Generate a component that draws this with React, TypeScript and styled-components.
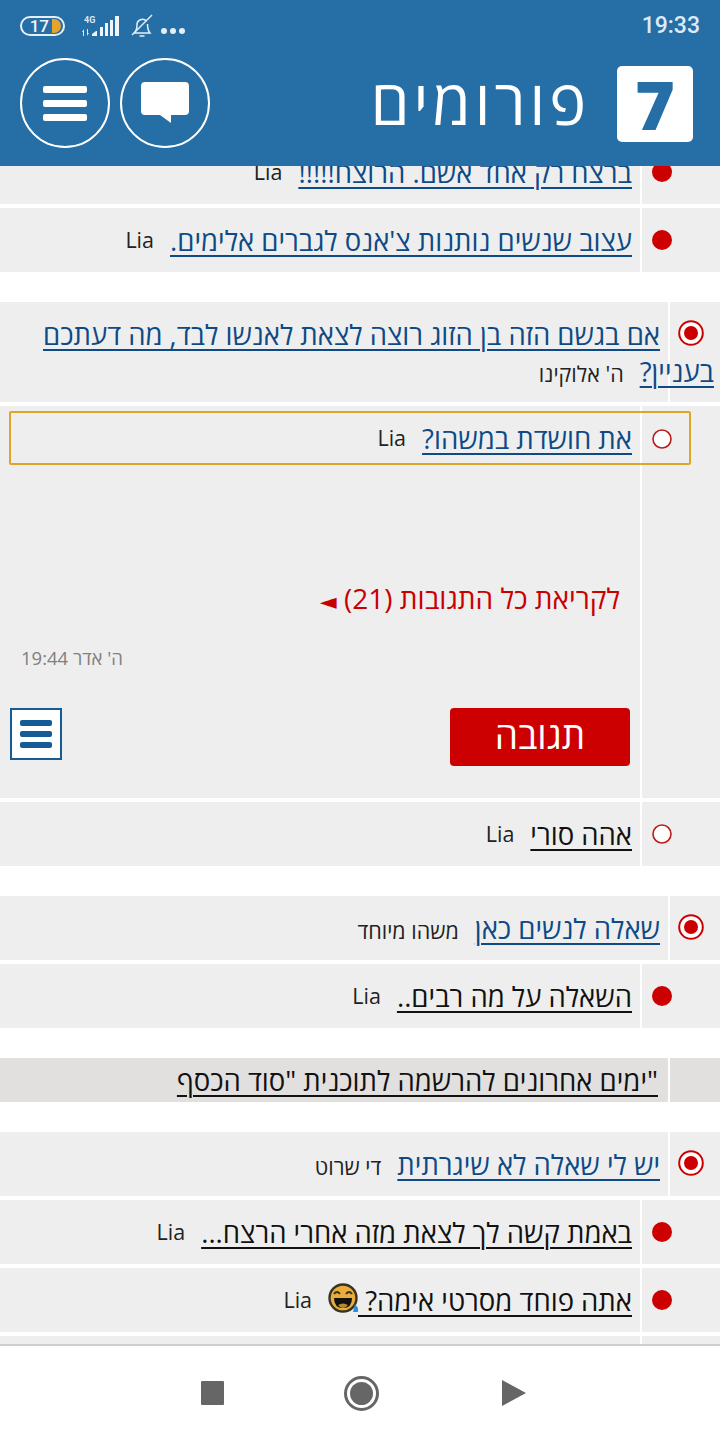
import styled, { createGlobalStyle } from "styled-components";

const GlobalStyle = createGlobalStyle`
  html, body {
    margin: 0;
    padding: 0;
    background: #fff;
  }
  * {
    box-sizing: border-box;
  }
`;

const font = `"Open Sans", "Noto Sans", "DejaVu Sans", sans-serif`;

function Bullet({ kind, size = 20 }: { kind: "full" | "empty" | "ring"; size?: number }) {
  if (kind === "ring") {
    return (
      <svg width="26" height="26" viewBox="0 0 26 26">
        <circle cx="13" cy="13" r="11.8" fill="#fff" stroke="#cc0000" strokeWidth="2" />
        <circle cx="13" cy="13" r="7" fill="#cc0000" />
      </svg>
    );
  }
  return (
    <svg width={size} height={size} viewBox="0 0 20 20">
      {kind === "full" ? (
        <circle cx="10" cy="10" r="10" fill="#cc0000" />
      ) : (
        <circle cx="10" cy="10" r="9" fill="#fff" stroke="#bb1a1a" strokeWidth="1.6" />
      )}
    </svg>
  );
}

function LaughEmoji() {
  return (
    <svg width="30" height="30" viewBox="0 0 30 30">
      <circle cx="15" cy="15" r="13.5" fill="#e9ad3c" stroke="#3a3320" strokeWidth="2.4" />
      <path d="M6 11q3-4 6 0M18 11q3-4 6 0" fill="none" stroke="#3a3320" strokeWidth="2" />
      <path d="M6 15h18q0 10-9 10T6 15z" fill="#111" />
      <path d="M10 22q5-3 10 0q-2 3-5 3t-5-3z" fill="#b9872c" />
      <path d="M27 21l3 4v4h-5z" fill="#2b8fe0" />
    </svg>
  );
}

type RowData = {
  title: string;
  author: string;
  visited?: boolean;
  kind?: "full" | "empty";
  emoji?: boolean;
};

function ChildRow({ title, author, visited, kind = "full", emoji }: RowData) {
  return (
    <Row>
      <TextCell>
        <TitleLink $visited={visited}>{title}</TitleLink>
        {emoji && (
          <EmojiWrap>
            <LaughEmoji />
          </EmojiWrap>
        )}
        <Author>{author}</Author>
      </TextCell>
      <IconCell>
        <Bullet kind={kind} />
      </IconCell>
    </Row>
  );
}

function ThreadRow({ title, author, visited }: RowData) {
  return (
    <Row>
      <ThreadText>
        <TitleLink $visited={visited}>{title}</TitleLink>
        <Author>{author}</Author>
      </ThreadText>
      <ThreadIcon>
        <Bullet kind="ring" />
      </ThreadIcon>
    </Row>
  );
}

export default function App() {
  return (
    <Page dir="rtl">
      <GlobalStyle />
      <Header>
        <StatusBar dir="ltr">
          <StatusLeft>
            <Battery>
              <BatteryNum>17</BatteryNum>
              <BatteryFill />
            </Battery>
            <svg width="38" height="22" viewBox="0 0 38 22">
              <text x="2" y="8" fontSize="9" fontWeight="700" fill="#dbe8f2" fontFamily="Roboto">
                4G
              </text>
              <path d="M2 14v7H1v-4H0zM5 14h1v4h1l-2 3z" fill="#dbe8f2" />
              <path
                d="M10 21v-2l4-3h1v5zM18 21v-9h3v9zM23 21v-13h3v13zM28 21v-16h3v16zM33 21v-20h4v20z"
                fill="#eef4f9"
              />
            </svg>
            <BellSlot>
              <svg width="24" height="24" viewBox="0 0 24 24" fill="none" stroke="#e6eff6" strokeWidth="1.5">
                <path d="M4 19c2.500-2 3-4 3-8a5.500 5.500 0 0 1 9.500-4M17.500 10c0 5 .8 7 2.500 9H4" />
                <path d="M9.500 22h5" />
                <path d="M2 21L22 1" />
              </svg>
            </BellSlot>
            <Dots>
              <Dot />
              <Dot />
              <Dot />
            </Dots>
          </StatusLeft>
          <Clock>19:33</Clock>
        </StatusBar>
        <TopBar>
          <Brand>
            <LogoBox>7</LogoBox>
            <BrandName>פורומים</BrandName>
          </Brand>
          <RoundButtons>
            <RoundButton>
              <svg width="48" height="42" viewBox="0 0 48 42">
                <path
                  d="M4 0h40a4 4 0 0 1 4 4v25a4 4 0 0 1-4 4H30v8L19 33H4a4 4 0 0 1-4-4V4a4 4 0 0 1 4-4z"
                  fill="#fff"
                />
              </svg>
            </RoundButton>
            <RoundButton>
              <BurgerBars>
                <BurgerBar />
                <BurgerBar />
                <BurgerBar />
              </BurgerBars>
            </RoundButton>
          </RoundButtons>
        </TopBar>
      </Header>

      <ListClip>
        <List>
          <Group>
            <ChildRow title="ברצח רק אחד אשם. הרוצח!!!!!" author="Lia" />
            <ChildRow title="עצוב שנשים נותנות צ'אנס לגברים אלימים." author="Lia" />
          </Group>

          <Group>
            <ThreadRow title="אם בגשם הזה בן הזוג רוצה לצאת לאנשו לבד, מה דעתכם בעניין?" author="ה' אלוקינו" />
            <Expanded>
              <SelectedBox>
                <TitleLink>את חושדת במשהו?</TitleLink>
                <Author>Lia</Author>
                <SelectedIcon>
                  <Bullet kind="empty" />
                </SelectedIcon>
              </SelectedBox>
              <ReadAll>
                לקריאת כל התגובות (21) <ReadAllArrow>◄</ReadAllArrow>
              </ReadAll>
              <DateLine>ה' אדר 19:44</DateLine>
              <Actions>
                <ReplyButton>תגובה</ReplyButton>
                <MenuBox>
                  <MenuBar />
                  <MenuBar />
                  <MenuBar />
                </MenuBox>
              </Actions>
            </Expanded>
            <ChildRow title="אהה סורי" author="Lia" visited kind="empty" />
          </Group>

          <Group>
            <ThreadRow title="שאלה לנשים כאן" author="משהו מיוחד" />
            <ChildRow title="השאלה על מה רבים.." author="Lia" visited />
          </Group>

          <Group>
            <Notice>
              <NoticeText>"ימים אחרונים להרשמה לתוכנית "סוד הכסף</NoticeText>
              <NoticeEdge />
            </Notice>
          </Group>

          <Group>
            <ThreadRow title="יש לי שאלה לא שיגרתית" author="די שרוט" />
            <ChildRow title="באמת קשה לך לצאת מזה אחרי הרצח..." author="Lia" visited />
            <ChildRow title={"אתה פוחד מסרטי אימה?\u00a0"} author="Lia" visited emoji />
            <ChildRow title="" author="" />
          </Group>
        </List>
      </ListClip>

      <NavBar>
        <NavSquare />
        <NavCircle>
          <NavCircleInner />
        </NavCircle>
        <NavPlay width="24" height="26" viewBox="0 0 24 26">
          <path d="M0 0l24 13L0 26z" fill="#666" />
        </NavPlay>
      </NavBar>
    </Page>
  );
}

const Page = styled.div`
  width: 720px;
  height: 1440px;
  display: flex;
  flex-direction: column;
  overflow: hidden;
  font-family: ${font};
  background: #fff;
`;

const Header = styled.header`
  height: 166px;
  flex: none;
  background: #266ea6;
  display: flex;
  flex-direction: column;
`;

const StatusBar = styled.div`
  height: 50px;
  display: flex;
  align-items: center;
  justify-content: space-between;
  padding: 2px 20px 0 20px;
`;

const StatusLeft = styled.div`
  display: flex;
  align-items: center;
`;

const Battery = styled.div`
  width: 45px;
  height: 20px;
  border: 2px solid #e6eff6;
  border-radius: 10px;
  display: flex;
  align-items: center;
  justify-content: flex-end;
  padding-right: 2px;
  margin-right: 17px;
`;

const BatteryNum = styled.span`
  font-family: Roboto, sans-serif;
  font-size: 17px;
  font-weight: 500;
  color: #eef4f9;
  margin-right: 3px;
`;

const BatteryFill = styled.span`
  width: 9px;
  height: 14px;
  background: #e3a52e;
  border-radius: 0 7px 7px 0;
`;

const BellSlot = styled.div`
  margin-left: 10px;
  display: flex;
`;

const Dots = styled.div`
  display: flex;
  gap: 3px;
  margin: 10px 0 0 7px;
`;

const Dot = styled.span`
  width: 6px;
  height: 6px;
  border-radius: 50%;
  background: #e6eff6;
`;

const Clock = styled.div`
  font-family: Roboto, sans-serif;
  font-size: 23px;
  font-weight: 500;
  color: #dcebf7;
  margin-top: -2px;
`;

const TopBar = styled.div`
  flex: 1;
  display: flex;
  align-items: flex-start;
  justify-content: space-between;
  padding: 8px 27px 0 20px;
`;

const Brand = styled.div`
  display: flex;
  align-items: center;
  gap: 27px;
  height: 92px;
`;

const LogoBox = styled.div`
  width: 76px;
  height: 76px;
  background: #fff;
  border-radius: 5px;
  color: #266ea6;
  font-family: "Open Sans", sans-serif;
  font-weight: 800;
  font-size: 68px;
  line-height: 76px;
  text-align: center;
`;

const BrandName = styled.div`
  color: #fff;
  font-size: 62px;
  font-weight: 500;
  line-height: 76px;
  letter-spacing: 4px;
  margin-top: -6px;
`;

const RoundButtons = styled.div`
  display: flex;
  gap: 10px;
`;

const RoundButton = styled.div`
  width: 90px;
  height: 90px;
  border: 2px solid #fff;
  border-radius: 50%;
  display: flex;
  align-items: center;
  justify-content: center;
`;

const BurgerBars = styled.div`
  display: flex;
  flex-direction: column;
  gap: 7px;
`;

const BurgerBar = styled.span`
  width: 44px;
  height: 7px;
  border-radius: 2px;
  background: #fff;
`;

const ListClip = styled.main`
  flex: 1;
  overflow: hidden;
  min-height: 0;
`;

const List = styled.div`
  margin-top: -26px;
  display: flex;
  flex-direction: column;
  gap: 30px;
`;

const Group = styled.section`
  display: flex;
  flex-direction: column;
  gap: 4px;
`;

const Row = styled.div`
  position: relative;
  display: flex;
  flex-direction: row;
  background: #eeeeee;
  min-height: 64px;
`;

const TextCell = styled.div`
  flex: 1;
  display: flex;
  align-items: center;
  padding: 0 88px 0 10px;
  min-width: 0;
  white-space: nowrap;
`;

const IconCell = styled.div`
  position: absolute;
  top: 0;
  bottom: 0;
  left: 640px;
  width: 80px;
  border-left: 2px solid #fff;
  display: flex;
  align-items: center;
  justify-content: flex-start;
  padding-right: 48px;
`;

const TitleLink = styled.a<{ $visited?: boolean }>`
  font-size: 27.5px;
  line-height: 37px;
  color: ${(p) => (p.$visited ? "#111" : "#0d4a86")};
  text-decoration: underline;
  text-underline-offset: 4px;
  text-decoration-thickness: 2px;
`;

const Author = styled.span`
  font-size: 21.5px;
  line-height: 1;
  color: #222;
  margin-right: 16px;
  white-space: nowrap;
`;

const EmojiWrap = styled.span`
  display: inline-flex;
  margin-bottom: 4px;
`;

const ThreadText = styled.div`
  position: relative;
  z-index: 1;
  padding: 14px 6px 12px 6px;
  text-indent: 54px;
  font-size: 27.5px;
  line-height: 37px;
  width: 100%;
`;

const ThreadIcon = styled.div`
  position: absolute;
  top: 0;
  left: 668px;
  bottom: 0;
  width: 52px;
  border-left: 2px solid #fff;
  display: flex;
  justify-content: flex-start;
  padding: 18px 16px 0 0;
`;

const Expanded = styled.div`
  position: relative;
  background: #eeeeee;
  height: 392px;
  padding: 5px 29px 0 9px;
  display: flex;
  flex-direction: column;
  &::before {
    content: "";
    position: absolute;
    left: 640px;
    top: 0;
    bottom: 0;
    width: 2px;
    background: #fff;
  }
`;

const SelectedBox = styled.div`
  position: relative;
  z-index: 1;
  height: 54px;
  width: 682px;
  margin-right: 0;
  border: 2px solid #e0a526;
  border-radius: 2px;
  display: flex;
  align-items: center;
  padding-right: 57px;
  background: transparent;
  white-space: nowrap;
`;

const SelectedIcon = styled.span`
  position: absolute;
  left: 641px;
  top: 16px;
  display: flex;
`;

const ReadAll = styled.div`
  margin: 114px 71px 0 0;
  font-size: 28px;
  line-height: 38px;
  color: #c80000;
`;

const ReadAllArrow = styled.span`
  font-size: 22px;
`;

const DateLine = styled.div`
  margin-top: 27px;
  align-self: flex-end;
  padding-left: 12px;
  font-size: 18.500px;
  line-height: 24px;
  color: #808080;
`;

const Actions = styled.div`
  margin-top: 38px;
  display: flex;
  justify-content: space-between;
  align-items: flex-start;
  padding: 0 61px 0 0;
  margin-left: -1px;
`;

const ReplyButton = styled.div`
  width: 180px;
  height: 58px;
  background: #cc0000;
  border-radius: 4px;
  color: #fff;
  font-size: 37px;
  line-height: 54px;
  text-align: center;
`;

const MenuBox = styled.div`
  width: 52px;
  height: 52px;
  background: #fff;
  border: 2px solid #155b96;
  display: flex;
  flex-direction: column;
  align-items: center;
  justify-content: center;
  gap: 5px;
  margin-left: 2px;
`;

const MenuBar = styled.span`
  width: 32px;
  height: 6px;
  border-radius: 2px;
  background: #155b96;
`;

const Notice = styled.div`
  position: relative;
  height: 44px;
  background: #e2dfdf;
  display: flex;
  align-items: center;
  padding-right: 62px;
`;

const NoticeText = styled.a`
  font-size: 27.5px;
  color: #111;
  text-decoration: underline;
  text-underline-offset: 4px;
  text-decoration-thickness: 2px;
  direction: rtl;
  unicode-bidi: plaintext;
  white-space: nowrap;
`;

const NoticeEdge = styled.span`
  position: absolute;
  left: 668px;
  top: 0;
  bottom: 0;
  width: 2px;
  background: #fff;
`;

const NavBar = styled.nav`
  height: 96px;
  flex: none;
  position: relative;
  z-index: 2;
  background: #fff;
  border-top: 2px solid #cfcfcf;
  display: flex;
  direction: ltr;
  align-items: center;
  justify-content: center;
  gap: 120px;
  padding-left: 7px;
`;

const NavSquare = styled.span`
  width: 23px;
  height: 24px;
  background: #666;
  border-radius: 1px;
`;

const NavCircle = styled.span`
  width: 35px;
  height: 35px;
  border: 3px solid #666;
  border-radius: 50%;
  display: flex;
  align-items: center;
  justify-content: center;
`;

const NavCircleInner = styled.span`
  width: 23px;
  height: 23px;
  background: #666;
  border-radius: 50%;
`;

const NavPlay = styled.svg`
  margin-left: 3px;
`;
